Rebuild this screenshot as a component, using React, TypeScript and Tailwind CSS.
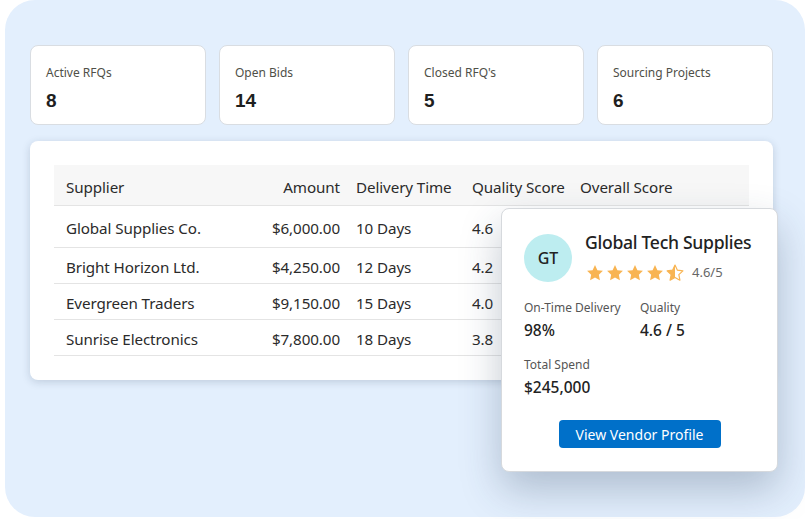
import React from 'react';

const stats = [
  { label: 'Active RFQs', value: '8' },
  { label: 'Open Bids', value: '14' },
  { label: "Closed RFQ's", value: '5' },
  { label: 'Sourcing Projects', value: '6' },
];

const rows = [
  { supplier: 'Global Supplies Co.', amount: '$6,000.00', days: '10 Days', quality: '4.6', h: 'h-[42px]' },
  { supplier: 'Bright Horizon Ltd.', amount: '$4,250.00', days: '12 Days', quality: '4.2', h: 'h-[36px]' },
  { supplier: 'Evergreen Traders', amount: '$9,150.00', days: '15 Days', quality: '4.0', h: 'h-[36px]' },
  { supplier: 'Sunrise Electronics', amount: '$7,800.00', days: '18 Days', quality: '3.8', h: 'h-[36px]' },
];

const STAR = 'M12 2.5l2.9 6.1 6.6.8-4.9 4.6 1.3 6.6L12 17.3l-5.9 3.3 1.3-6.6-4.9-4.6 6.6-.8z';

function Star({ half = false }: { half?: boolean }) {
  return (
    <svg width="20" height="20" viewBox="0 0 24 24">
      {half ? (
        <>
          <defs>
            <clipPath id="halfclip">
              <rect x="0" y="0" width="12" height="24" />
            </clipPath>
          </defs>
          <path d={STAR} fill="none" stroke="#f8b452" strokeWidth="1.4" strokeLinejoin="round" />
          <path d={STAR} fill="#f8b452" clipPath="url(#halfclip)" />
        </>
      ) : (
        <path d={STAR} fill="#f8b452" />
      )}
    </svg>
  );
}

export default function App() {
  return (
    <div className="w-[805px] h-[519px] bg-white overflow-hidden" style={{ fontFamily: '"Noto Sans", "Open Sans", sans-serif' }}>
      <div className="relative ml-[5px] h-[517px] rounded-[30px] bg-[#e3effd] pt-[45px] pl-[25px] pr-[32px]">

        {/* STATS */}
        <div className="grid grid-cols-4 gap-[13px]">
          {stats.map(s => (
            <div key={s.label} className="h-[80px] rounded-[8px] border border-[#d9dde2] bg-white pl-[15px] pt-[18px]">
              <p className="text-[12px] leading-[18px] text-[#4f5048]">{s.label}</p>
              <p className="mt-[8px] text-[19px] leading-[22px] font-bold text-[#1f1f1f]" style={{ fontFamily: '"Liberation Sans", Arial, sans-serif' }}>{s.value}</p>
            </div>
          ))}
        </div>

        {/* TABLE */}
        <div className="mt-[16px] h-[239px] rounded-[8px] bg-white p-[24px] shadow-[0_2px_8px_rgba(30,50,80,0.18)]">
          <div className="text-[15.2px] tracking-[-0.1px] text-[#2b2b2b]">
            <div className="flex h-[41px] items-center bg-[#f7f7f7] border-b border-[#e4e4e4] pt-[5px]">
              <div className="w-[200px] pl-[12px]">Supplier</div>
              <div className="w-[94px] pr-[8px] text-right">Amount</div>
              <div className="w-[116px] pl-[8px]">Delivery Time</div>
              <div className="w-[108px] pl-[8px]">Quality Score</div>
              <div className="pl-[8px]">Overall Score</div>
            </div>
            {rows.map(r => (
              <div key={r.supplier} className={`flex items-center border-b border-[#e4e4e4] pt-[4px] ${r.h}`}>
                <div className="w-[200px] pl-[12px]">{r.supplier}</div>
                <div className="w-[94px] pr-[8px] text-right">{r.amount}</div>
                <div className="w-[116px] pl-[8px]">{r.days}</div>
                <div className="w-[108px] pl-[8px]">{r.quality}</div>
              </div>
            ))}
          </div>
        </div>

        {/* VENDOR POPOVER */}
        <div className="absolute left-[496px] top-[208px] w-[277px] h-[264px] rounded-[8px] border border-[#d6d9dd] bg-white shadow-[0_18px_40px_rgba(40,60,90,0.28)] px-[22px] pt-[24px]">
          <div className="flex">
            <div className="mt-[1px] flex h-[48px] w-[48px] shrink-0 items-center justify-center rounded-full bg-[#bdedf0] text-[16px] font-medium text-[#222]">
              GT
            </div>
            <div className="ml-[13px] -mt-[2px]">
              <p className="whitespace-nowrap text-[17.6px] leading-[22px] tracking-[-0.3px] font-medium text-[#222]">Global Tech Supplies</p>
              <div className="mt-[10px] flex items-center">
                <div className="flex gap-[0px]">
                  <Star />
                  <Star />
                  <Star />
                  <Star />
                  <Star half />
                </div>
                <span className="ml-[7px] text-[13px] text-[#666]">4.6/5</span>
              </div>
            </div>
          </div>

          <div className="mt-[16px] flex">
            <div className="w-[116px]">
              <p className="text-[12px] leading-[18px] text-[#555]">On-Time Delivery</p>
              <p className="mt-[3px] text-[15.5px] leading-[20px] font-medium text-[#222]">98%</p>
            </div>
            <div>
              <p className="text-[12px] leading-[18px] text-[#555]">Quality</p>
              <p className="mt-[3px] text-[15.5px] leading-[20px] font-medium text-[#222]">4.6 / 5</p>
            </div>
          </div>

          <div className="mt-[16px]">
            <p className="text-[12px] leading-[18px] text-[#555]">Total Spend</p>
            <p className="mt-[3px] text-[15.5px] leading-[20px] font-medium text-[#222]">$245,000</p>
          </div>

          <div className="mt-[23px] flex justify-center">
            <button className="h-[28px] w-[162px] rounded-[4px] bg-[#0070c9] text-[14px] text-white">
              View Vendor Profile
            </button>
          </div>
        </div>

      </div>
    </div>
  );
}
